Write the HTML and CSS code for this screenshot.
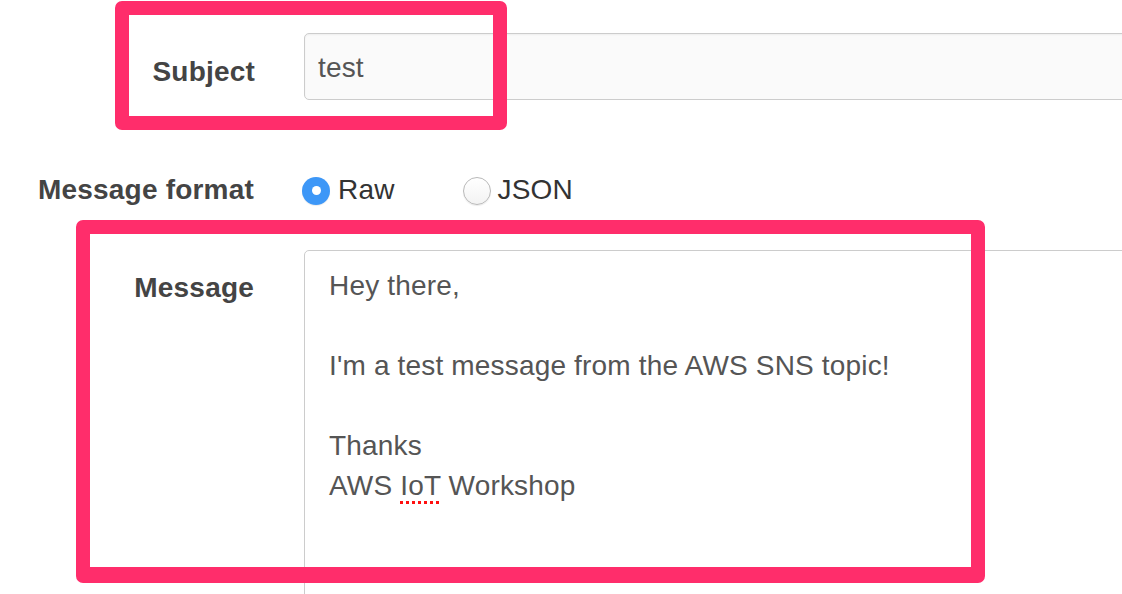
FILE: index.html
```html
<!DOCTYPE html>
<html lang="en">
<head>
<meta charset="utf-8">
<title>Publish message</title>
<link rel="stylesheet" href="styles.css">
</head>
<body>
<div class="page">
  <form class="form">
    <div class="row row-subject">
      <label class="lbl">Subject</label>
      <div class="input">test</div>
    </div>
    <div class="row row-format">
      <span class="lbl">Message format</span>
      <div class="radios">
        <span class="option option-raw"><span class="radio checked"></span><span class="radio-text">Raw</span></span>
        <span class="option option-json"><span class="radio"></span><span class="radio-text">JSON</span></span>
      </div>
    </div>
    <div class="row row-message">
      <label class="lbl">Message</label>
      <div class="textarea">
        <div class="line">Hey there,</div>
        <div class="line">&nbsp;</div>
        <div class="line">I'm a test message from the AWS SNS topic!</div>
        <div class="line">&nbsp;</div>
        <div class="line">Thanks</div>
        <div class="line">AWS <span class="spell">IoT</span> Workshop</div>
      </div>
    </div>
  </form>
  <div class="highlight hl-subject"></div>
  <div class="highlight hl-message"></div>
</div>
</body>
</html>
```
FILE: styles.css
```css
html, body {
  margin: 0;
  padding: 0;
  background: #ffffff;
  overflow: hidden;
}
body {
  font-family: "Liberation Sans", Arial, Helvetica, sans-serif;
  font-size: 28px;
  letter-spacing: 0.17px;
  color: #444444;
}
.page {
  position: relative;
  width: 1122px;
  height: 594px;
  overflow: hidden;
}
.form {
  padding-top: 33px;
}
.row {
  display: grid;
  grid-template-columns: 255px 900px;
  column-gap: 49px;
  align-items: start;
}
.lbl {
  font-weight: bold;
  text-align: right;
  line-height: 40px;
  color: #444444;
  letter-spacing: 0.2px;
}
.row-subject .lbl {
  padding-top: 19px;
}
.input {
  box-sizing: border-box;
  height: 67px;
  padding: 14px 13px 0;
  line-height: 40px;
  border: 1px solid #cccccc;
  border-radius: 5px;
  background: #fafafa;
  box-shadow: inset 0 1px 2px rgba(0, 0, 0, 0.05);
  color: #555555;
}
.row-format {
  margin-top: 70px;
}
.row-format .lbl {
  margin-right: 1px;
}
.radios {
  display: flex;
  align-items: center;
  height: 40px;
  margin-left: -2px;
  gap: 68px;
}
.option {
  display: flex;
  align-items: center;
  gap: 8px;
}
.option-json {
  gap: 7px;
}
.radio {
  box-sizing: border-box;
  width: 28px;
  height: 28px;
  margin-top: 1px;
  border-radius: 50%;
  border: 1px solid #b9b9b9;
  background: linear-gradient(#ffffff, #f3f3f3);
  box-shadow: 0 1px 1px rgba(0, 0, 0, 0.08);
  flex: none;
}
.radio.checked {
  border: none;
  background: #3d97f7;
  display: flex;
  align-items: center;
  justify-content: center;
}
.radio.checked::after {
  content: "";
  width: 9px;
  height: 9px;
  border-radius: 50%;
  background: #ffffff;
}
.radio-text {
  line-height: 40px;
  color: #333333;
}
.row-message {
  margin-top: 40px;
}
.row-message .lbl {
  padding-top: 18px;
  margin-right: 1px;
}
.textarea {
  box-sizing: border-box;
  height: 420px;
  padding: 15px 24px 0;
  border: 1px solid #cccccc;
  border-radius: 5px;
  background: #ffffff;
  color: #555555;
}
.line {
  line-height: 40px;
  white-space: pre;
}
.spell {
  text-decoration: underline dotted #ff1010;
  text-decoration-thickness: 3px;
  text-underline-offset: 6px;
}
.highlight {
  position: absolute;
  box-sizing: border-box;
  border: 14px solid #ff2d6b;
  border-radius: 7px;
  pointer-events: none;
}
.hl-subject {
  left: 115px;
  top: 1px;
  width: 392px;
  height: 129px;
}
.hl-message {
  left: 76px;
  top: 220px;
  width: 909px;
  height: 363px;
  border-width: 14px 14px 16px 14px;
}
```
